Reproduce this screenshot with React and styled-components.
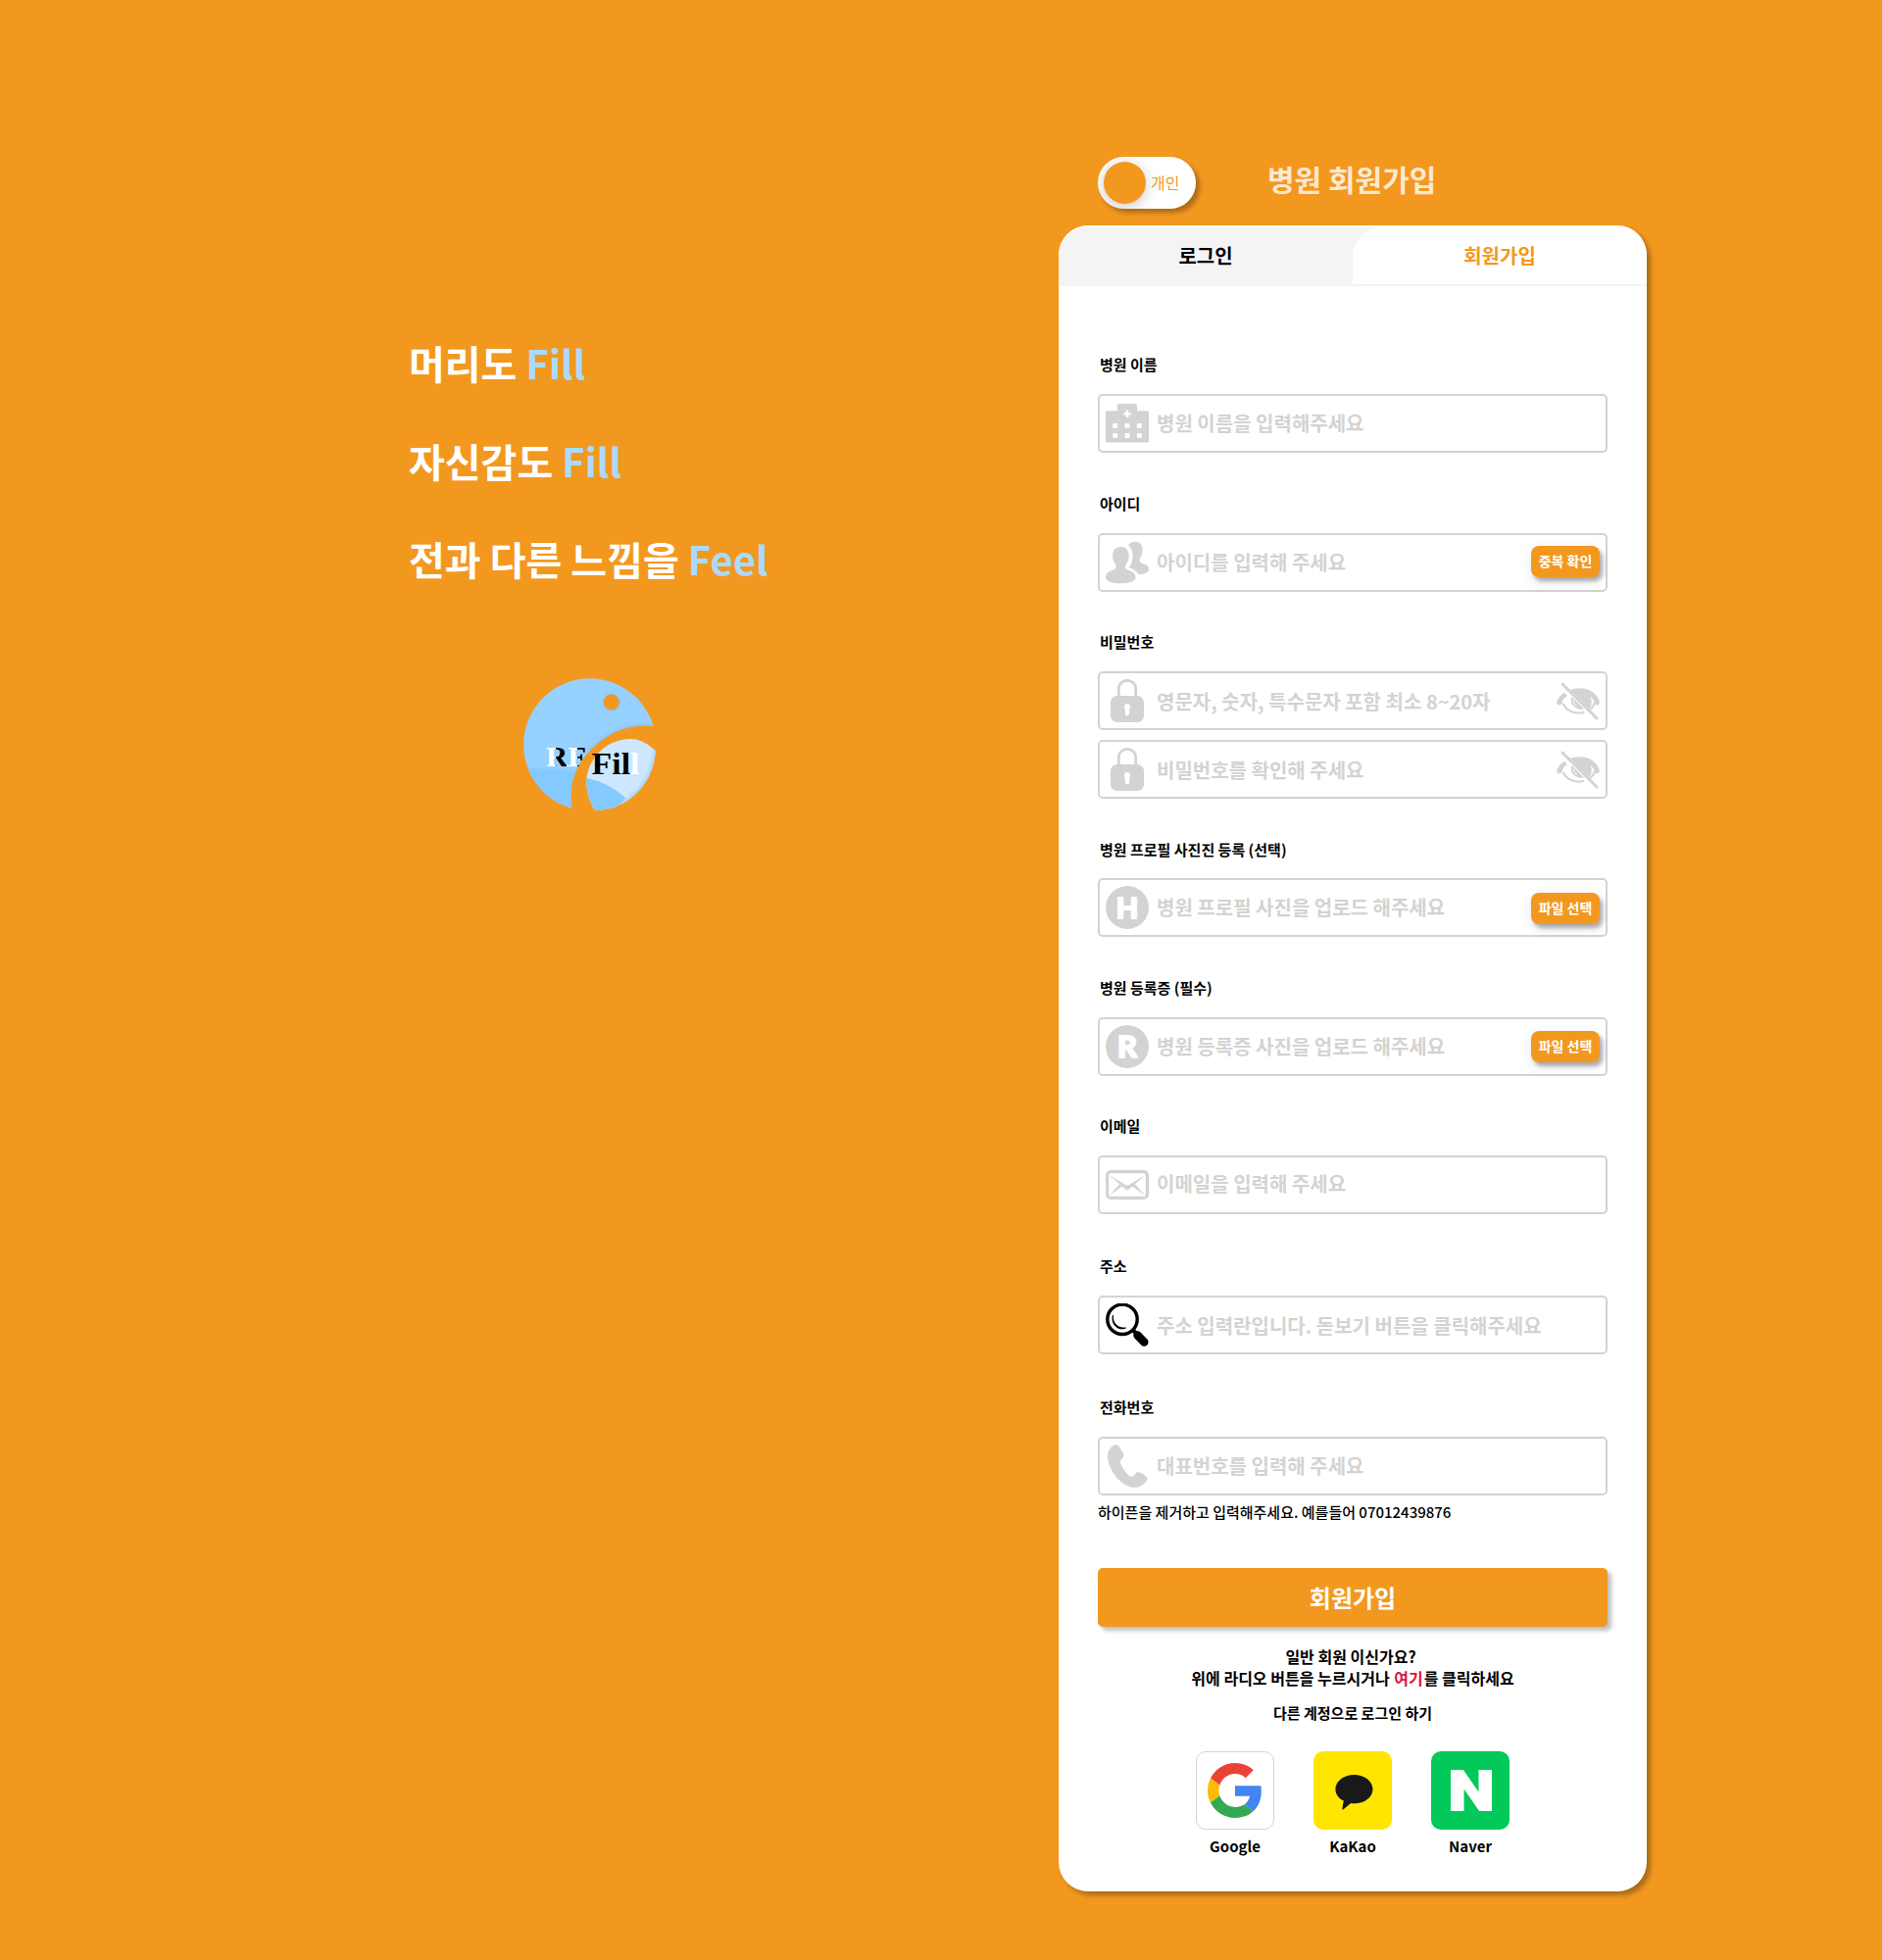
import React from "react";
import styled, { createGlobalStyle } from "styled-components";
import { SiNaver } from "react-icons/si";

const ORANGE = "#f3981f";
const GREY = "#d3d3d3";

const GlobalStyle = createGlobalStyle`
  * { box-sizing: border-box; }
  body {
    margin: 0;
    background: ${ORANGE};
    font-family: "Noto Sans CJK KR", "Noto Sans", sans-serif;
  }
  button { font-family: inherit; border: 0; padding: 0; cursor: pointer; }
  svg { display: block; }
`;

const Page = styled.main`
  display: flex;
  align-items: flex-start;
  min-height: 2000px;
  background: ${ORANGE};
`;

const Intro = styled.section`
  width: 1080px;
  padding: 320px 0 0 417px;
`;

const Slogan = styled.p`
  margin: 0;
  height: 100px;
  line-height: 100px;
  font-size: 40px;
  font-weight: 700;
  color: #fff;
`;

const Accent = styled.span`
  color: #aadaff;
`;

const LogoBox = styled.div`
  padding: 72px 0 0 117px;
`;

const Panel = styled.section`
  width: 600px;
  padding-top: 160px;
`;

const PanelHead = styled.header`
  display: flex;
  align-items: flex-start;
  height: 70px;
  padding-left: 40px;
`;

const Toggle = styled.div`
  display: flex;
  align-items: center;
  gap: 5px;
  width: 100px;
  height: 53px;
  padding-left: 6px;
  border-radius: 27px;
  background: #fff;
  overflow: hidden;
`;

const ToggleShadow = styled.div`
  border-radius: 27px;
  box-shadow: 4px 4px 5px rgba(0, 0, 0, 0.3);
`;

const Knob = styled.span`
  width: 43px;
  height: 43px;
  border-radius: 50%;
  background: ${ORANGE};
  box-shadow: 0 3px 14px rgba(0, 0, 0, 0.22);
`;

const ToggleText = styled.span`
  font-size: 16px;
  line-height: 24px;
  margin-top: -1px;
  color: ${ORANGE};
`;

const Title = styled.h1`
  margin: -1px 0 0 73px;
  font-size: 30px;
  line-height: 46px;
  font-weight: 700;
  color: rgba(255, 255, 255, 0.8);
`;

const Card = styled.div`
  height: 1700px;
  padding-top: 2px;
  border-radius: 30px;
  background: #fff;
  box-shadow: 4px 4px 5px rgba(0, 0, 0, 0.3);
`;

const Tabs = styled.div`
  display: grid;
  grid-template-columns: 1fr 1fr;
  height: 60px;
  border-radius: 30px 30px 0 0;
  background: #f4f4f4;
  overflow: hidden;
`;

const Tab = styled.button`
  height: 58px;
  font-size: 20px;
  font-weight: 700;
  line-height: 58px;
  color: ${(p) => (p.$active ? ORANGE : "#000")};
  background: ${(p) => (p.$active ? "#fff" : "transparent")};
  border-radius: ${(p) => (p.$active ? "30px 0 0 0" : "0")};
`;

const Form = styled.div`
  display: flex;
  flex-direction: column;
  padding: 0 40px;
`;

const Label = styled.label`
  height: 22px;
  margin: ${(p) => p.$top}px 0 ${(p) => p.$bottom || 19}px 2px;
  font-size: 15px;
  line-height: 22px;
  font-weight: 700;
  color: #000;
`;

const Field = styled.div`
  display: flex;
  align-items: flex-start;
  height: 60px;
  padding: 6px;
  margin-top: ${(p) => p.$top || 0}px;
  border: 2px solid ${GREY};
  border-radius: 5px;
  background: #fff;
`;

const Placeholder = styled.span`
  flex: 1;
  margin: ${(p) => p.$drop}px 0 0 8px;
  font-size: 20px;
  line-height: 30px;
  font-weight: 700;
  color: ${GREY};
  white-space: nowrap;
`;

const SmallButton = styled.button`
  width: 70px;
  height: 32px;
  margin-top: ${(p) => p.$drop}px;
  padding-bottom: 2px;
  border-radius: 8px;
  background: ${ORANGE};
  color: #fff;
  font-size: 14px;
  font-weight: 700;
  line-height: 30px;
  box-shadow: 3px 4px 4px rgba(0, 0, 0, 0.3), 0 4px 14px rgba(60, 90, 160, 0.12);
`;

const Hint = styled.p`
  height: 22px;
  margin: 6px 0 46px;
  font-size: 15px;
  line-height: 22px;
  font-weight: 500;
  color: #000;
  white-space: nowrap;
`;

const Submit = styled.button`
  height: 60px;
  border-radius: 5px;
  background: ${ORANGE};
  color: #fff;
  font-size: 24px;
  font-weight: 700;
  line-height: 60px;
  box-shadow: 4px 4px 4px rgba(0, 0, 0, 0.25);
`;

const Notice = styled.p`
  margin: 19px 0 0;
  font-size: 16px;
  line-height: 22px;
  font-weight: 700;
  text-align: center;
  color: #000;
`;

const Question = styled.span`
  display: block;
  padding-right: 4px;
`;

const Here = styled.span`
  margin: 0 1px;
  color: crimson;
`;

const Other = styled.p`
  height: 22px;
  margin: 14px 0 28px;
  font-size: 15px;
  line-height: 22px;
  font-weight: 700;
  text-align: center;
  color: #000;
`;

const Socials = styled.div`
  display: flex;
  justify-content: center;
  gap: 40px;
`;

const Social = styled.div`
  display: flex;
  flex-direction: column;
  align-items: center;
  gap: 5px;
  font-size: 15px;
  line-height: 24px;
  font-weight: 700;
  color: #000;
`;

const SocialTile = styled.div`
  display: flex;
  align-items: center;
  justify-content: center;
  width: 80px;
  height: 80px;
  padding-left: ${(p) => p.$nudge || 0}px;
  border: ${(p) => (p.$outlined ? `1px solid ${GREY}` : "0")};
  border-radius: 10px;
  background: ${(p) => p.$bg};
  color: #fff;
`;

const Icon = ({ children }) => (
  <svg width="44" height="44" viewBox="0 0 44 44" fill={GREY}>
    {children}
  </svg>
);

const Hospital = () => (
  <Icon>
    <path d="M1 9.300h11V4a2 2 0 0 1 2-2h16a2 2 0 0 1 2 2v5.300h11a1 1 0 0 1 1 1V40.500a1 1 0 0 1-1 1H1a1 1 0 0 1-1-1V10.300a1 1 0 0 1 1-1z" />
    <g fill="#fff">
      <path d="M20.800 8.500h2.400v2.500h2.500v2.400h-2.500v2.500h-2.400v-2.500h-2.500V11h2.500z" />
      {[22, 32].map((y) =>
        [7.200, 19.500, 31.800].map((x) => (
          <rect key={`${x}-${y}`} x={x} y={y} width="5" height="5" rx="1" />
        ))
      )}
    </g>
  </Icon>
);

const Users = () => (
  <Icon>
    <path d="M30 .8c5 0 7.500 3.300 7.500 8 0 4-1 6.500-2.500 9-.8 1.700-.3 3.800 1.500 4.600l5 2.200c2.500 1.200 2.800 3.500 2.300 5.800-2.500 3-6.500 4-10.500 3.700-2-3.500-5.500-5.500-10-7 0 0 2.500-1.500 3-4.500 2-6.500 2.300-14-3.300-18C24 2.500 26.500.8 30 .8z" />
    <path d="M15.300 6c5.200 0 8.400 3.700 8.400 9 0 4.500-1.800 7-3.200 9.500-.8 2-.5 4 2 5 4 1.300 8 3 8 7.500 0 4-6 6.300-15.200 6.300S0 41 0 37c0-4.500 4-6.200 8-7.500 2.500-1 3-3 2.200-5C9 22 7 19.500 7 15c0-5.300 3-9 8.300-9z" />
  </Icon>
);

const Lock = () => (
  <Icon>
    <path d="M13.300 18v-8.500a8.700 8.200 0 0 1 17.400 0V18" fill="none" stroke={GREY} strokeWidth="2.800" />
    <rect x="5" y="17" width="34" height="27" rx="6.500" />
    <path d="M22 25a3.200 3.200 0 0 1 2.200 5.500V35a2.200 2.200 0 0 1-4.400 0v-4.500A3.200 3.200 0 0 1 22 25z" fill="#fff" />
  </Icon>
);

const EyeOff = () => (
  <Icon>
    <path d="M12.500 11.500C19 8.500 28 8.500 34 11.500c5 2.500 8.500 6.500 9.800 11.500 0 3-2 4-4.300 3-1-3.500-2.500-6.500-5.500-8.500 2.500 4 2.200 8.500-.5 13z" />
    <path d="M8 13.800 11 17C7.500 18.800 6 21.500 5.300 25 3.500 27.300.3 26.800 0 24c1-4 4-8 8-10.200z" />
    <path d="M15.500 18 28 30.500C20.500 32 12 26 15.500 18z" />
    <path d="M17.500 21.500c-.5 2.500.8 4.500 3 5.500" fill="none" stroke="#fff" strokeWidth="1" />
    <path d="M7 25.500c3.500 7 11.500 10.500 20.500 8.500" fill="none" stroke={GREY} strokeWidth="2" strokeLinecap="round" />
    <path d="M39 24c-.8 2.800-2.200 4.800-4.500 7" fill="none" stroke={GREY} strokeWidth="2" />
    <path d="M7 4.500 42 41" stroke="#fff" strokeWidth="1.500" />
    <path d="M6 5 41 40" stroke={GREY} strokeWidth="3" strokeLinecap="round" />
  </Icon>
);

const Letter = ({ char, size }) => (
  <Icon>
    <circle cx="22" cy="22" r="22" />
    <text
      x="22"
      y="32.500"
      textAnchor="middle"
      fontFamily="Lato, sans-serif"
      fontWeight="900"
      fontSize={size}
      fill="#fff"
      stroke="#fff"
      strokeWidth="1.800"
      strokeLinejoin="round"
    >
      {char}
    </text>
  </Icon>
);

const Envelope = () => (
  <Icon>
    <rect x="1.600" y="5.600" width="40.800" height="26.800" rx="3.500" fill="none" stroke={GREY} strokeWidth="3.200" transform="translate(0 3)" />
    <path d="M3.500 12 18 20.500Q22 24.500 26 20.500L40.500 12 24 26.500Q22 28.300 20 26.500z" />
    <path d="M3.500 33 14 21.500 17 23.500zM40.500 33 30 21.500 27 23.500z" />
  </Icon>
);

const Magnifier = () => (
  <Icon>
    <g fill="none" stroke="#000">
      <circle cx="17" cy="16.300" r="15.200" strokeWidth="3.400" />
      <path d="M27 26.500l4 4" strokeWidth="4" />
      <path d="M32.500 32.500l6.800 7" strokeWidth="8.500" strokeLinecap="round" />
    </g>
    <path d="M7.500 12C6.500 19.500 12 26 20.500 25 14 28.500 4.500 22 7.500 12z" fill="#000" stroke="#000" strokeWidth=".9" />
  </Icon>
);

const Phone = () => (
  <Icon>
    <path d="M8.500.7c2-1 3.800-.4 5 1.200l4.500 7c1 2 .6 3.200-.8 4.600-1.900 1.900-2.800 4.200-1.800 6.500 2 4.500 4.800 8.500 8.100 11.500 2 1.800 4.100 1.600 5.800-.3 1.300-1.500 2.500-3.500 4.500-3 3 .7 5.800 2.500 7.800 4.800 1.200 1.400 1.200 2.800 0 4.300-4 5.500-9.600 7.700-16.100 6C13 40 2.500 24.500 2 12.500 1.800 7 4.500 2.500 8.500.7z" />
  </Icon>
);

const Logo = () => (
  <svg width="136" height="136" viewBox="0 0 136 136">
    <defs>
      <clipPath id="body">
        <path d="M132.500 49A67.500 67.500 0 1 0 49.300 132.800C46 112 51 92 66 76 82 58 104 46 132.500 49z" />
      </clipPath>
      <clipPath id="fin">
        <path d="M134.700 74C126 66 118 62 109 62 88 62 70 77 65 98 63 111 66 124 73 135 104 135 133 110 134.700 74z" />
      </clipPath>
      <linearGradient id="split" gradientUnits="userSpaceOnUse" x1="23" y1="0" x2="65" y2="0">
        <stop offset=".24" stopColor="#fff" />
        <stop offset=".25" stopColor="#000" />
        <stop offset=".5" stopColor="#000" />
        <stop offset=".51" stopColor="#fff" />
        <stop offset=".76" stopColor="#fff" />
        <stop offset=".77" stopColor="#000" />
      </linearGradient>
      <filter id="soft" x="-20%" y="-20%" width="140%" height="140%">
        <feGaussianBlur stdDeviation="1.500" />
      </filter>
    </defs>
    <g clipPath="url(#body)">
      <rect width="136" height="136" fill="#97d1ff" />
      <path d="M0 93Q30 90 60 96V136H0z" fill="#84c9ff" filter="url(#soft)" />
      <path d="M132.500 49C104 46 82 58 66 76" fill="none" stroke="#7dbdf0" strokeWidth="4" opacity=".5" filter="url(#soft)" />
      <circle cx="90" cy="25" r="8.500" fill="#83bdeb" filter="url(#soft)" />
      <circle cx="89.700" cy="24.500" r="7.900" fill={ORANGE} />
    </g>
    <g clipPath="url(#fin)">
      <rect width="136" height="136" fill="#cce7ff" />
      <path d="M134.700 74C133 110 104 135 73 135" fill="none" stroke="#a9d5fb" strokeWidth="5" filter="url(#soft)" />
      <path d="M60 101Q85 105 104 122L90 140H60z" fill="#84c9ff" />
    </g>
    <g fontFamily="Liberation Serif, serif" fontWeight="700">
      <text x="23" y="89.700" fontSize="29.500" textLength="41" lengthAdjust="spacingAndGlyphs" fill="url(#split)">
        RF
      </text>
      <text x="69.500" y="97.700" fontSize="31" textLength="49" lengthAdjust="spacingAndGlyphs">
        Fil<tspan fill="#fff">l</tspan>
      </text>
    </g>
  </svg>
);

const Google = () => (
  <svg width="56" height="56" viewBox="0 0 48 48">
    <path fill="#EA4335" d="M24 9.500c3.540 0 6.710 1.220 9.210 3.600l6.850-6.850C35.900 2.380 30.470 0 24 0 14.620 0 6.510 5.380 2.560 13.220l7.980 6.190C12.430 13.720 17.740 9.500 24 9.500z" />
    <path fill="#4285F4" d="M46.980 24.550c0-1.570-.15-3.090-.38-4.550H24v9.020h12.940c-.58 2.960-2.260 5.480-4.780 7.180l7.730 6c4.510-4.180 7.090-10.360 7.090-17.650z" />
    <path fill="#FBBC05" d="M10.530 28.590c-.48-1.450-.76-2.990-.76-4.590s.27-3.140.76-4.590l-7.980-6.190C.92 16.460 0 20.120 0 24c0 3.880.92 7.540 2.560 10.780l7.970-6.190z" />
    <path fill="#34A853" d="M24 48c6.480 0 11.930-2.130 15.890-5.810l-7.730-6c-2.150 1.450-4.920 2.300-8.160 2.300-6.260 0-11.570-4.220-13.470-9.910l-7.980 6.190C6.510 42.620 14.620 48 24 48z" />
  </svg>
);

const Kakao = () => (
  <svg width="80" height="80" viewBox="0 0 80 80">
    <path
      d="M41.500 24c10.500 0 19 6.500 19 14.700s-8.500 14.600-19 14.600c-1.200 0-2.300-.1-3.400-.2l-7.500 6.200c-.8.600-1.500.3-1.300-.7l1.500-8c-5.300-2.600-8.400-6.900-8.400-11.900C22.400 30.500 31 24 41.500 24z"
      fill="#1a1919"
    />
  </svg>
);

const groups = [
  { label: "병원 이름", top: 69, rows: [{ icon: <Hospital />, text: "병원 이름을 입력해주세요", drop: 7 }] },
  {
    label: "아이디",
    top: 41,
    rows: [{ icon: <Users />, text: "아이디를 입력해 주세요", drop: 7, action: "중복 확인", actionDrop: 5 }],
  },
  {
    label: "비밀번호",
    top: 40,
    rows: [
      { icon: <Lock />, text: "영문자, 숫자, 특수문자 포함 최소 8~20자", drop: 8, hidden: true },
      { icon: <Lock />, text: "비밀번호를 확인해 주세요", drop: 8, hidden: true },
    ],
  },
  {
    label: "병원 프로필 사진진 등록 (선택)",
    top: 41,
    bottom: 18,
    rows: [
      { icon: <Letter char="H" size={29} />, text: "병원 프로필 사진을 업로드 해주세요", drop: 7, action: "파일 선택", actionDrop: 7 },
    ],
  },
  {
    label: "병원 등록증 (필수)",
    top: 41,
    rows: [
      { icon: <Letter char="R" size={31} />, text: "병원 등록증 사진을 업로드 해주세요", drop: 7, action: "파일 선택", actionDrop: 6 },
    ],
  },
  { label: "이메일", top: 40, rows: [{ icon: <Envelope />, text: "이메일을 입력해 주세요", drop: 6 }] },
  {
    label: "주소",
    top: 42,
    rows: [{ icon: <Magnifier />, text: "주소 입력란입니다. 돋보기 버튼을 클릭해주세요", drop: 8 }],
  },
  { label: "전화번호", top: 43, rows: [{ icon: <Phone />, text: "대표번호를 입력해 주세요", drop: 7 }] },
];

export default function App() {
  return (
    <>
      <GlobalStyle />
      <Page>
        <Intro>
          <Slogan>머리도 <Accent>Fill</Accent></Slogan>
          <Slogan>자신감도 <Accent>Fill</Accent></Slogan>
          <Slogan>전과 다른 느낌을 <Accent>Feel</Accent></Slogan>
          <LogoBox>
            <Logo />
          </LogoBox>
        </Intro>
        <Panel>
          <PanelHead>
            <ToggleShadow>
              <Toggle>
                <Knob />
                <ToggleText>개인</ToggleText>
              </Toggle>
            </ToggleShadow>
            <Title>병원 회원가입</Title>
          </PanelHead>
          <Card>
            <Tabs>
              <Tab>로그인</Tab>
              <Tab $active>회원가입</Tab>
            </Tabs>
            <Form>
              {groups.map((group) => (
                <React.Fragment key={group.label}>
                  <Label $top={group.top} $bottom={group.bottom}>{group.label}</Label>
                  {group.rows.map((row, i) => (
                    <Field key={row.text} $top={i ? 10 : 0}>
                      {row.icon}
                      <Placeholder $drop={row.drop}>{row.text}</Placeholder>
                      {row.hidden && <EyeOff />}
                      {row.action && <SmallButton $drop={row.actionDrop}>{row.action}</SmallButton>}
                    </Field>
                  ))}
                </React.Fragment>
              ))}
              <Hint>하이픈을 제거하고 입력해주세요. 예를들어 07012439876</Hint>
              <Submit>회원가입</Submit>
              <Notice>
                <Question>일반 회원 이신가요?</Question>
                위에 라디오 버튼을 누르시거나 <Here>여기</Here>를 클릭하세요
              </Notice>
              <Other>다른 계정으로 로그인 하기</Other>
              <Socials>
                <Social>
                  <SocialTile $bg="#fff" $outlined>
                    <Google />
                  </SocialTile>
                  Google
                </Social>
                <Social>
                  <SocialTile $bg="#ffe600">
                    <Kakao />
                  </SocialTile>
                  KaKao
                </Social>
                <Social>
                  <SocialTile $bg="#03c95a" $nudge={2}>
                    <SiNaver size={42} />
                  </SocialTile>
                  Naver
                </Social>
              </Socials>
            </Form>
          </Card>
        </Panel>
      </Page>
    </>
  );
}
